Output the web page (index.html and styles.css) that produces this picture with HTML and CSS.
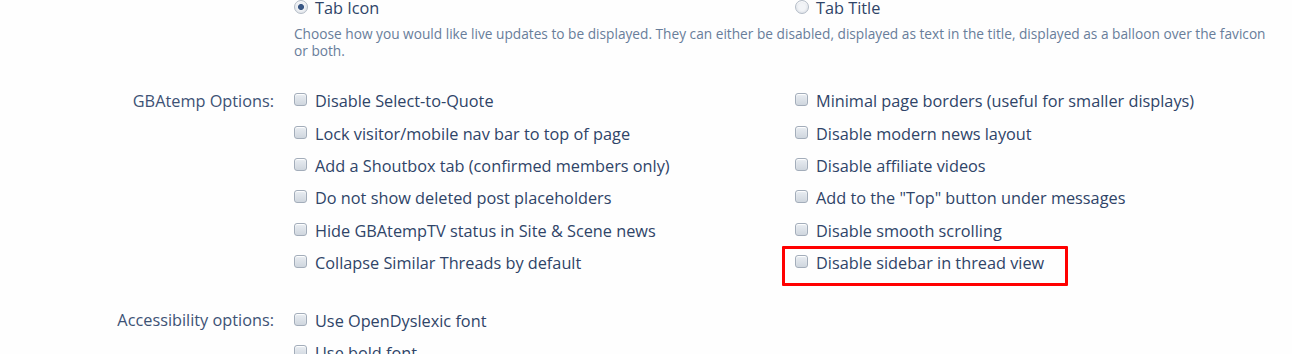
FILE: index.html
```html
<!DOCTYPE html>
<html lang="en">
<head>
    <meta charset="UTF-8">
    <title>Preferences</title>
    <link rel="stylesheet" href="styles.css">
</head>
<body>
    <div class="prefs">
        <!-- Live updates display -->
        <div class="ctrl-row first">
            <div class="ctrl-label"></div>
            <div class="ctrl-unit">
                <div class="choices">
                    <label class="choice"><input type="radio" name="live" checked> Tab Icon</label>
                    <label class="choice"><input type="radio" name="live"> Tab Title</label>
                </div>
                <p class="explain">Choose how you would like live updates to be displayed. They can either be disabled, displayed as text in the title, displayed as a balloon over the favicon or both.</p>
            </div>
        </div>

        <!-- GBAtemp options -->
        <div class="ctrl-row">
            <div class="ctrl-label">GBAtemp Options:</div>
            <div class="ctrl-unit">
                <div class="choices">
                    <label class="choice"><input type="checkbox"> Disable Select-to-Quote</label>
                    <label class="choice"><input type="checkbox"> Minimal page borders (useful for smaller displays)</label>
                    <label class="choice"><input type="checkbox"> Lock visitor/mobile nav bar to top of page</label>
                    <label class="choice"><input type="checkbox"> Disable modern news layout</label>
                    <label class="choice"><input type="checkbox"> Add a Shoutbox tab (confirmed members only)</label>
                    <label class="choice"><input type="checkbox"> Disable affiliate videos</label>
                    <label class="choice"><input type="checkbox"> Do not show deleted post placeholders</label>
                    <label class="choice"><input type="checkbox"> Add to the "Top" button under messages</label>
                    <label class="choice"><input type="checkbox"> Hide GBAtempTV status in Site &amp; Scene news</label>
                    <label class="choice"><input type="checkbox"> Disable smooth scrolling</label>
                    <label class="choice"><input type="checkbox"> Collapse Similar Threads by default</label>
                    <label class="choice marked"><input type="checkbox"> Disable sidebar in thread view</label>
                </div>
            </div>
        </div>

        <!-- Accessibility -->
        <div class="ctrl-row">
            <div class="ctrl-label">Accessibility options:</div>
            <div class="ctrl-unit">
                <div class="choices single">
                    <label class="choice"><input type="checkbox"> Use OpenDyslexic font</label>
                    <label class="choice"><input type="checkbox"> Use bold font</label>
                </div>
            </div>
        </div>
    </div>
</body>
</html>
```

FILE: styles.css
```css
body {
    margin: 0;
    background-color: #fefefe;
    font-family: "Open Sans", Arial, sans-serif;
    color: #2f4468;
    overflow: hidden;
}
.prefs {
    margin-top: -3px;
}
.ctrl-row {
    display: grid;
    grid-template-columns: 274px 1fr;
    column-gap: 20px;
    margin-bottom: 25px;
}
.ctrl-row.first {
    margin-bottom: 26px;
}
.ctrl-label {
    text-align: right;
    font-size: 16.3px;
    line-height: 22px;
    padding-top: 5px;
    color: #3d5275;
}
.first .ctrl-label {
    padding-top: 0;
}
.choices {
    display: grid;
    grid-template-columns: 501px 1fr;
}
.choices.single {
    grid-template-columns: 1fr;
}
.choice {
    display: flex;
    align-items: center;
    height: 32.4px;
    font-size: 16.3px;
    white-space: nowrap;
    position: relative;
}
.first .choice {
    height: 22px;
}
.choice input {
    -webkit-appearance: none;
    appearance: none;
    width: 13px;
    height: 13px;
    margin: -3px 8px 0 0;
    border: 1px solid #a3adba;
    border-radius: 3px;
    background: linear-gradient(#e9edf2, #cfd6de);
    box-shadow: inset 0 1px 1px #ffffff;
    flex: none;
}
.choice input[type="radio"] {
    width: 14px;
    height: 14px;
    margin-right: 7px;
    border-radius: 50%;
    background: radial-gradient(circle, #f2f4f7 40%, #cfd5dd);
    border-color: #b4bcc7;
}
.choice input[type="radio"]:checked {
    background: radial-gradient(circle, #3a5784 0, #3a5784 2.6px, #f0f2f5 3.4px, #d3d9e0 100%);
}
.explain {
    margin: 6px 0 0;
    font-size: 13.7px;
    line-height: 17px;
    color: #687d9a;
    padding-right: 18px;
}
/* annotation box */
.marked::after {
    content: "";
    position: absolute;
    left: -13px;
    top: -1px;
    width: 280px;
    height: 34px;
    border: 3px solid #ff0000;
    border-radius: 1px;
}
```
